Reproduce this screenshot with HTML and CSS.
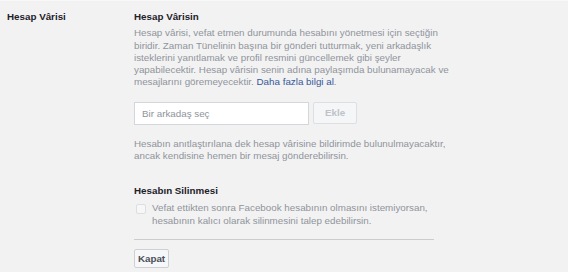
FILE: index.html
```html
<!DOCTYPE html>
<html lang="tr">
<head>
  <meta charset="UTF-8">
  <title>Hesap Vârisi</title>
  <link rel="stylesheet" href="styles.css">
</head>
<body>
  <div class="settings-row">
    <div class="row-label">Hesap Vârisi</div>
    <div class="row-content">
      <h3>Hesap Vârisin</h3>
      <p class="desc">Hesap vârisi, vefat etmen durumunda hesabını yönetmesi için seçtiğin biridir. Zaman Tünelinin başına bir gönderi tutturmak, yeni arkadaşlık isteklerini yanıtlamak ve profil resmini güncellemek gibi şeyler yapabilecektir. Hesap vârisin senin adına paylaşımda bulunamayacak ve mesajlarını göremeyecektir. <a href="#">Daha fazla bilgi al</a>.</p>

      <div class="picker">
        <input type="text" placeholder="Bir arkadaş seç">
        <button class="btn-add" disabled>Ekle</button>
      </div>

      <p class="desc">Hesabın anıtlaştırılana dek hesap vârisine bildirimde bulunulmayacaktır, ancak kendisine hemen bir mesaj gönderebilirsin.</p>

      <h3 class="section-title">Hesabın Silinmesi</h3>
      <label class="check">
        <span class="box"></span>
        <span class="desc">Vefat ettikten sonra Facebook hesabının olmasını istemiyorsan, hesabının kalıcı olarak silinmesini talep edebilirsin.</span>
      </label>

      <div class="actions">
        <button class="btn-close">Kapat</button>
      </div>
    </div>
  </div>
</body>
</html>
```

FILE: styles.css
```css
body {
  margin: 0;
  background: #fff;
  font-family: "Liberation Sans", Arial, sans-serif;
  font-size: 9.8px;
  line-height: 12.25px;
}

.settings-row {
  width: 568px;
  height: 272px;
  background: #f2f2f2;
  border-top: 1px solid #f8f8f8;
  display: grid;
  grid-template-columns: 127px 300px;
  padding: 10px 0 0 7px;
  box-sizing: border-box;
}

.row-label {
  font-weight: bold;
  color: #1d2129;
}

.row-content h3 {
  margin: 0;
  font-size: 9.8px;
  color: #1d2129;
}

.desc {
  color: #90949c;
  margin: 0;
}

.row-content > .desc {
  width: 318px;
  margin-top: 4px;
}

.desc a {
  color: #365899;
  text-decoration: none;
}

.picker {
  display: flex;
  gap: 4px;
  margin: 13px 0 13px;
}

.picker input {
  width: 175px;
  height: 23px;
  box-sizing: border-box;
  border: 1px solid #d3d6db;
  padding: 0 7px;
  font-family: inherit;
  font-size: 9.8px;
  background: #fff;
}

.picker input::placeholder {
  color: #90949c;
}

.btn-add {
  width: 44px;
  height: 22px;
  border: 1px solid #dddfe2;
  border-radius: 2px;
  background: #f5f6f7;
  color: #bec3c9;
  font-family: inherit;
  font-size: 9.8px;
  font-weight: bold;
  padding: 0;
}

.section-title {
  margin-top: 23px !important;
}

.check {
  display: flex;
  gap: 6px;
  margin-top: 5px;
  padding-left: 2px;
}

.check .box {
  flex: none;
  width: 10px;
  height: 10px;
  margin-top: 2px;
  box-sizing: border-box;
  border: 1px solid #dcdee2;
  border-radius: 2px;
  background: #f7f7f7;
}

.actions {
  border-top: 1px solid #ccc;
  margin-top: 12px;
  padding-top: 9px;
}

.btn-close {
  width: 35px;
  height: 19px;
  padding: 0;
  border: 1px solid #ced0d4;
  border-radius: 2px;
  background: #f6f7f9;
  color: #4b4f56;
  font-family: inherit;
  font-size: 9.8px;
  font-weight: bold;
}
```
